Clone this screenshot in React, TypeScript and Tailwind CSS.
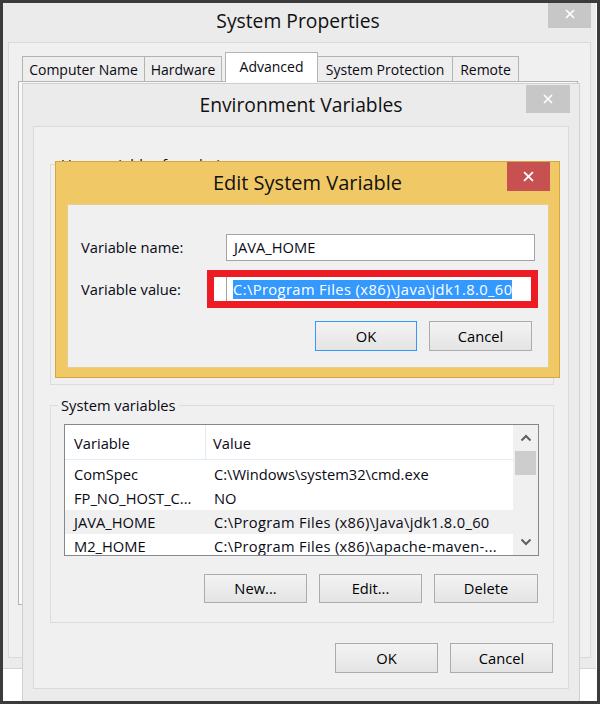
function CloseX({ size = 10 }: { size?: number }) {
  return (
    <svg width={size} height={size} viewBox="0 0 10 10" fill="none" stroke="white" strokeWidth={1.7}>
      <path d="M1 1L9 9M9 1L1 9" />
    </svg>
  )
}

function Chevron({ down = false }: { down?: boolean }) {
  return (
    <svg width="12" height="8" viewBox="0 0 12 8" fill="none" stroke="#5f5f5f" strokeWidth={2}>
      <path d={down ? 'M1.5 1.5L6 6L10.5 1.5' : 'M1.5 6.5L6 2L10.5 6.5'} />
    </svg>
  )
}

const btn =
  'flex items-center justify-center border bg-gradient-to-b from-[#f3f3f3] to-[#e4e4e4] text-black'

const rows = [
  { name: 'ComSpec', value: 'C:\\Windows\\system32\\cmd.exe' },
  { name: 'FP_NO_HOST_C...', value: 'NO' },
  { name: 'JAVA_HOME', value: 'C:\\Program Files (x86)\\Java\\jdk1.8.0_60', hl: true, wide: true },
  { name: 'M2_HOME', value: 'C:\\Program Files (x86)\\apache-maven-...', wide: true },
]

export default function App() {
  return (
    <div className="relative w-[600px] h-[704px] overflow-hidden bg-white font-['Open_Sans','Noto_Sans',sans-serif] text-[14.7px] text-[#0a0a14]">

      {/* ── System Properties window ── */}
      <div className="absolute left-0 top-0 w-[596px] h-[669px] bg-[#ebebeb] border-b border-[#d4d4d4]">
        <div className="h-[42px] flex items-center justify-center text-[19.3px] text-[#111]">System Properties</div>
        <div className="absolute right-[5px] top-0 w-[43px] h-[28px] bg-[#c7c7c7] flex items-center justify-center">
          <CloseX />
        </div>
        <div className="ml-[8px] w-[583px] h-[616px] bg-[#f0f0f0] border border-[#dadada] pt-[9px]">
          <div className="flex items-end h-[29px] pl-[13px] text-[14px]">
            <div className="w-[123px] h-[25px] border border-b-0 border-[#b3b3b3] bg-[#eeeeee] flex items-center justify-center">Computer Name</div>
            <div className="w-[77px] h-[25px] border border-b-0 border-l-0 border-[#b3b3b3] bg-[#eeeeee] flex items-center justify-center">Hardware</div>
            <div className="relative z-10 ml-[3px] -mb-[1px] w-[93px] h-[30px] border border-b-0 border-[#b3b3b3] bg-white flex items-start pt-[3px] justify-center">Advanced</div>
            <div className="w-[135px] h-[25px] border border-b-0 border-l-0 border-[#b3b3b3] bg-[#eeeeee] flex items-center justify-center">System Protection</div>
            <div className="w-[66px] h-[25px] border border-b-0 border-l-0 border-[#b3b3b3] bg-[#eeeeee] flex items-center justify-center">Remote</div>
          </div>
          <div className="ml-[9px] w-[560px] h-[524px] border border-[#b3b3b3] bg-[#f9f9f9]" />
        </div>
      </div>

      {/* ── Environment Variables window ── */}
      <div className="absolute left-[22px] top-[83px] w-[558px] h-[640px] bg-[#ebebeb] border border-[#d0d0d0]">
        <div className="h-[42px] flex items-center justify-center text-[19.3px] text-[#111]">Environment Variables</div>
        <div className="absolute right-[9px] top-[1px] w-[44px] h-[28px] bg-[#c7c7c7] flex items-center justify-center">
          <CloseX />
        </div>
        <div className="ml-[10px] w-[536px] h-[563px] bg-[#f0f0f0] border border-[#dadada] pl-[16px] pr-[14px]">
          <fieldset className="mt-[27px] w-[504px] h-[231px] border border-[#dcdcdc]">
            <legend className="ml-[7px] px-[3px] leading-[20px]">User variables for admin</legend>
          </fieldset>

          <fieldset className="mt-[10px] w-[504px] h-[228px] border border-[#dcdcdc]">
            <legend className="ml-[7px] px-[3px] leading-[20px]">System variables</legend>

            {/* list view */}
            <div className="ml-[13px] mt-[9px] w-[475px] h-[132px] border border-[#828790] bg-white flex">
              <div className="w-[448px] flex flex-col overflow-hidden">
                <div className="h-[35px] shrink-0 flex border-b border-[#e2eaf4]">
                  <div className="w-[141px] pl-[9px] pt-[2px] flex items-center border-r border-[#e2eaf4]">Variable</div>
                  <div className="pl-[7px] pt-[2px] flex items-center">Value</div>
                </div>
                <div className="pt-[2px]">
                  {rows.map((r) => (
                    <div key={r.name} className={`h-[24px] flex items-center whitespace-nowrap ${r.hl ? 'bg-[#f0f0f0]' : ''}`}>
                      <div className="w-[141px] pl-[9px]">{r.name}</div>
                      <div className={`pl-[8px] ${r.wide ? 'tracking-[0.3px]' : ''}`}>{r.value}</div>
                    </div>
                  ))}
                </div>
              </div>
              <div className="w-[25px] bg-[#f0f0f0] flex flex-col items-center">
                <div className="h-[26px] flex items-center justify-center"><Chevron /></div>
                <div className="w-[21px] h-[24px] bg-[#cdcdcd]" />
                <div className="flex-1" />
                <div className="h-[26px] flex items-center justify-center"><Chevron down /></div>
              </div>
            </div>

            <div className="mt-[18px] pr-[15px] flex justify-end gap-[12px]">
              <div className={`${btn} w-[103px] h-[29px] border-[#acacac]`}>New...</div>
              <div className={`${btn} w-[103px] h-[29px] border-[#acacac]`}>Edit...</div>
              <div className={`${btn} w-[104px] h-[29px] border-[#acacac]`}>Delete</div>
            </div>
          </fieldset>

          <div className="mt-[20px] pr-[1px] flex justify-end gap-[12px]">
            <div className={`${btn} w-[103px] h-[30px] border-[#acacac]`}>OK</div>
            <div className={`${btn} w-[103px] h-[30px] border-[#acacac]`}>Cancel</div>
          </div>
        </div>
      </div>

      {/* ── Edit System Variable dialog ── */}
      <div className="absolute left-[55px] top-[161px] w-[505px] h-[217px] bg-[#f1c866] border border-[#d9a63e]">
        <div className="h-[42px] flex items-center justify-center text-[20px] text-[#111]">Edit System Variable</div>
        <div className="absolute right-[9px] top-0 w-[43px] h-[29px] bg-[#c75050] flex items-center justify-center">
          <CloseX size={11} />
        </div>
        <div className="ml-[11px] w-[482px] h-[164px] bg-[#f0f0f0] border border-[#e6cf8e] pl-[13px] pt-[29px]">
          <div className="flex items-center">
            <div className="w-[145px]">Variable name:</div>
            <div className="w-[309px] h-[27px] border border-[#a3a3a3] bg-white pl-[7px] flex items-center">JAVA_HOME</div>
          </div>
          <div className="mt-[9px] flex items-center">
            <div className="w-[145px]">Variable value:</div>
            <div className="-ml-[19px] w-[331px] h-[38px] border-[7px] border-[#ed1c24] bg-white flex items-stretch pl-[12px]">
              <div className="w-px bg-[#a3a3a3]" />
              <div className="pl-[6px] flex items-center">
                <span className="bg-[#3399ff] text-white leading-[19px] whitespace-nowrap tracking-[0.4px]">C:\Program Files (x86)\Java\jdk1.8.0_60</span>
              </div>
            </div>
          </div>
          <div className="mt-[13px] pr-[16px] flex justify-end gap-[12px]">
            <div className={`${btn} w-[102px] h-[30px] border-[#3399ff]`}>OK</div>
            <div className={`${btn} w-[103px] h-[30px] border-[#acacac]`}>Cancel</div>
          </div>
        </div>
      </div>

      {/* ── outer frame of the screenshot ── */}
      <div className="absolute inset-0 border-[3px] border-[#3b3b3b] pointer-events-none" />
    </div>
  )
}
